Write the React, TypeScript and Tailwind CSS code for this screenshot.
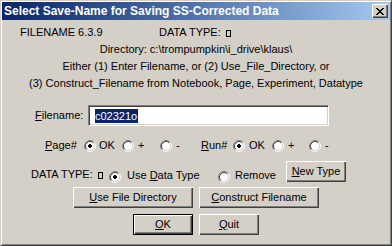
import React from "react";

const Radio = ({ checked = false, className = "" }: { checked?: boolean; className?: string }) => (
  <svg width="12" height="12" viewBox="0 0 12 12" className={"shrink-0 " + className}>
    <circle cx="6" cy="6" r="4.5" fill="#ffffff" />
    <path d="M2.11 9.89 A5.5 5.5 0 0 1 9.89 2.11" fill="none" stroke="#808080" strokeWidth="1" />
    <path d="M9.89 2.11 A5.5 5.5 0 0 1 2.11 9.89" fill="none" stroke="#ffffff" strokeWidth="1" />
    <path d="M2.82 9.18 A4.5 4.5 0 0 1 9.18 2.82" fill="none" stroke="#404040" strokeWidth="1" />
    <path d="M9.18 2.82 A4.5 4.5 0 0 1 2.82 9.18" fill="none" stroke="#d4d0c8" strokeWidth="1" />
    {checked && <path d="M5 4h2v1h1v2h-1v1h-2v-1h-1v-2h1z" fill="#000000" shapeRendering="crispEdges" />}
  </svg>
);

const Box = () => (
  <span className="inline-block w-[5px] h-[7px] border border-black align-[-1px] ml-[5px]" />
);

const Btn = ({
  children,
  className = "",
  isDefault = false,
}: {
  children: React.ReactNode;
  className?: string;
  isDefault?: boolean;
}) => (
  <div
    className={
      "h-[21px] flex items-center justify-center bg-[#d4d0c8] text-black leading-[13px] " +
      (isDefault
        ? "border border-black shadow-[inset_1px_1px_0_#ffffff,inset_-1px_-1px_0_#404040,inset_-2px_-2px_0_#808080] "
        : "shadow-[inset_1px_1px_0_#ffffff,inset_-1px_-1px_0_#404040,inset_-2px_-2px_0_#808080] ") +
      className
    }
  >
    {children}
  </div>
);

const XGlyph = () => {
  const rows = ["xx....xx", ".xx..xx.", "..xxxx..", "...xx...", "..xxxx..", ".xx..xx.", "xx....xx"];
  return (
    <svg width="8" height="7" viewBox="0 0 8 7" shapeRendering="crispEdges">
      {rows.flatMap((r, y) =>
        r.split("").map((c, x) => (c === "x" ? <rect key={`${x}-${y}`} x={x} y={y} width="1" height="1" fill="#000" /> : null))
      )}
    </svg>
  );
};

export default function App() {
  return (
    <div className="w-[392px] h-[246px] bg-[#d4d0c8] font-['Liberation_Sans',Arial,sans-serif] text-[11px] text-black overflow-hidden">
      <div className="w-full h-full border border-t-[#d4d0c8] border-l-[#d4d0c8] border-b-[#404040] border-r-[#404040] shadow-[inset_1px_1px_0_#ffffff,inset_-1px_-1px_0_#808080] p-[1px]">
        <div className="w-full h-full flex flex-col">
          {/* Title bar */}
          <div className="h-[18px] shrink-0 flex items-center justify-between bg-gradient-to-r from-[#0a246a] to-[#a6caf0] pl-[2px] pr-[2px]">
            <span className="text-white font-bold text-[12px] leading-[14px] whitespace-nowrap font-['Liberation_Sans',Arial,sans-serif]">
              Select Save-Name for Saving SS-Corrected Data
            </span>
            <div className="w-[16px] h-[14px] bg-[#d4d0c8] flex items-center justify-center shadow-[inset_1px_1px_0_#ffffff,inset_-1px_-1px_0_#404040,inset_-2px_-2px_0_#808080]">
              <XGlyph />
            </div>
          </div>

          {/* Body */}
          <div className="flex flex-col leading-[17px] whitespace-nowrap">
            <div className="mt-[4px] h-[17px] flex">
              <span className="ml-[18px] w-[139px]">FILENAME 6.3.9</span>
              <span>
                DATA TYPE:
                <Box />
              </span>
            </div>
            <div className="h-[17px] text-center">Directory: c:\trompumpkin\i_drive\klaus\</div>
            <div className="h-[17px] text-center">Either (1) Enter Filename, or (2) Use_File_Directory, or</div>
            <div className="h-[17px] text-center">(3) Construct_Filename from Notebook, Page, Experiment, Datatype</div>

            {/* Filename */}
            <div className="mt-[13px] h-[21px] flex items-center">
              <span className="ml-[33px] w-[53px] leading-[13px]">
                <span className="underline">F</span>ilename:
              </span>
              <div className="w-[241px] h-[21px] bg-white border border-t-[#808080] border-l-[#808080] border-b-white border-r-white shadow-[inset_1px_1px_0_#404040,inset_-1px_-1px_0_#d4d0c8] flex items-center pl-[6px]">
                <span className="bg-[#0a246a] text-white leading-[14px] h-[14px] pr-[1px]">c02321o</span>
              </div>
            </div>

            {/* Page / Run */}
            <div className="mt-[13px] h-[13px] flex items-center leading-[13px]">
              <span className="ml-[43px] w-[39px]">
                <span className="underline">P</span>age#
              </span>
              <Radio checked />
              <span className="ml-[3px] w-[23px]">OK</span>
              <Radio />
              <span className="ml-[4px] w-[22px]">+</span>
              <Radio />
              <span className="ml-[4px] w-[25px]">-</span>
              <span className="w-[32px]">
                <span className="underline">R</span>un#
              </span>
              <Radio checked />
              <span className="ml-[4px] w-[23px]">OK</span>
              <Radio />
              <span className="ml-[4px] w-[21px]">+</span>
              <Radio />
              <span className="ml-[4px]">-</span>
            </div>

            {/* Data type */}
            <div className="mt-[9px] h-[21px] flex items-start leading-[13px]">
              <span className="ml-[29px] mt-[7px] w-[78px]">
                DATA TYPE:
                <Box />
              </span>
              <Radio checked className="mt-[10px]" />
              <span className="ml-[6px] mt-[8px] w-[91px]">
                Use <span className="underline">D</span>ata Type
              </span>
              <Radio className="mt-[10px]" />
              <span className="ml-[5px] mt-[8px] w-[51px]">Remove</span>
              <Btn className="w-[60px]">
                <span>
                  <span className="underline">N</span>ew Type
                </span>
              </Btn>
            </div>

            {/* Directory / construct */}
            <div className="mt-[5px] flex">
              <Btn className="ml-[71px] w-[120px]">
                <span>
                  <span className="underline">U</span>se File Directory
                </span>
              </Btn>
              <Btn className="ml-[6px] w-[120px]">
                <span>
                  <span className="underline">C</span>onstruct Filename
                </span>
              </Btn>
            </div>

            {/* OK / Quit */}
            <div className="mt-[6px] flex">
              <Btn isDefault className="ml-[131px] w-[60px]">
                <span>
                  <span className="underline">O</span>K
                </span>
              </Btn>
              <Btn className="ml-[6px] w-[60px]">
                <span>
                  <span className="underline">Q</span>uit
                </span>
              </Btn>
            </div>
          </div>
        </div>
      </div>
    </div>
  );
}
